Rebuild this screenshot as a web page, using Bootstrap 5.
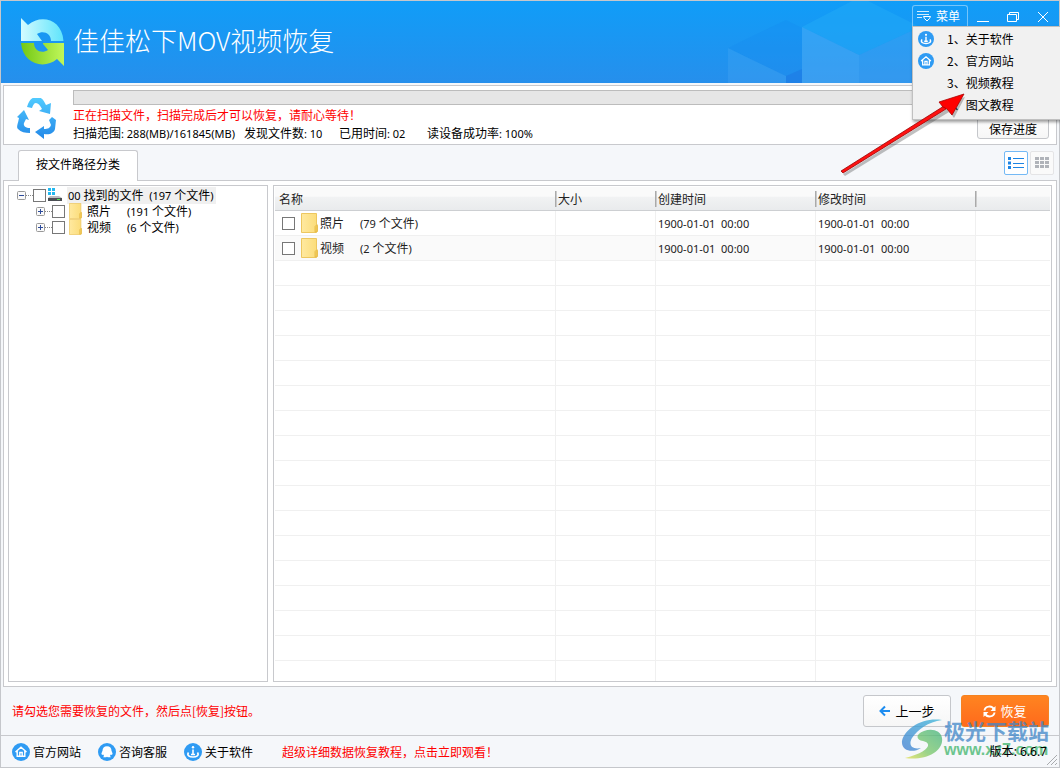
<!DOCTYPE html>
<html lang="zh-CN">
<head>
<meta charset="utf-8">
<meta name="viewport" content="width=device-width, initial-scale=1">
<title>佳佳松下MOV视频恢复</title>
<link href="https://cdn.jsdelivr.net/npm/bootstrap@5.3.0/dist/css/bootstrap.min.css" rel="stylesheet">
<style>
  body { font: 12px/16px "Noto Sans CJK SC", "Noto Sans", sans-serif; color: #000; background: #f5f7fa; }
  .app { border: 1px solid #c5c7cb; }
  .lat { font-family: "Noto Sans", sans-serif; font-size: 11px; white-space: pre; }
  .edge { border: 1px solid #c8c9cd; }
  button { font: inherit; }
  a { color: #000; text-decoration: none; }
  .red { color: #f00; }

  /* title bar */
  .titlebar { height: 82px; background: linear-gradient(#109df8, #268fec); }
  .cubes { position: absolute; top: 0; right: 0; }
  .brand-name { font-size: 26px; line-height: 40px; font-weight: 300; color: #fff; margin: 0 0 4px 6px; }
  .win { height: 22px; top: 4px; right: 1px; }
  .win button { background: none; border: 0; padding: 0 0 2px; color: #fff; }
  .win .menu-btn { width: 56px; height: 22px; border: 1px solid #74c5fb; border-bottom: 0; border-radius: 3px 3px 0 0; padding-left: 4px; }
  .win .ctl { width: 30px; height: 22px; }
  .menu-pop { top: 25px; right: -1px; width: 148px; padding: 1px 0 3px; background: #f1f1f1; border: 1px solid #c0c0c0; border-right: 0; box-shadow: 1px 2px 3px #0006; z-index: 5; }
  .menu-pop a { height: 22px; padding-left: 5px; }
  .menu-pop .ico { width: 16px; height: 16px; margin-right: 13px; }

  /* scan panel */
  .scan { margin: 2px 2px 0; height: 60px; background: #fff; padding: 4px 5px 0 12px; }
  .bar { height: 15px; border: 1px solid #bcbcbc; background: #e6e6e6; border-radius: 0; }
  .facts { padding-top: 2px; }
  .facts .red { margin-bottom: 2px; }
  .s1 { width: 171px; } .s2 { width: 95px; } .s3 { width: 88px; }
  .plain-btn { border: 1px solid #c5c7cb; border-radius: 3px; background: linear-gradient(#fff, #f6f6f6); }
  .save { width: 72px; height: 24px; margin: 0 2px 0 0; padding: 3px 0 0; line-height: 16px; margin-top: 10px; }

  /* tabs */
  .tabs { height: 35px; padding: 5px 5px 0 17px; }
  .tab-on { width: 120px; height: 31px; margin-bottom: -1px; background: #fff; border: 1px solid #c8c9cd; border-bottom: 0; border-radius: 3px 3px 0 0; z-index: 1; padding: 0 0 4px; }
  .views { gap: 2px; padding-top: 1px; }
  .view { width: 24px; height: 24px; padding: 0; border: 1px solid #e4e4e6; border-radius: 2px; background: #fafafa; }
  .view.on { border-color: #74b9f5; background: #fff; }

  /* work area */
  .work { margin: 0 2px; padding: 4px; background: #fff; gap: 5px; min-height: 0; }
  .tree { width: 260px; padding: 1px 0 0 8px; }
  .tree ul { padding-left: 19px; }
  .tree .node { height: 16px; }
  .tree .exp { width: 9px; height: 9px; }
  .dots { width: 7px; border-top: 1px dotted #888; }
  input[type=checkbox] { appearance: none; width: 13px; height: 13px; border: 1px solid #777; background: #fff; margin: 0; flex: none; }
  .sel { background: #f0f0f0; padding: 0 2px 0 1px; margin-left: 4px; }
  .tree li label { margin-left: 5px; }
  .list { padding: 1px; overflow: hidden; min-width: 0; min-height: 0; }
  .files { table-layout: fixed; width: 100%; border-collapse: separate; border-spacing: 0; color: #222; }
  .files th, .files td { padding: 0 0 0 3px; }
  .files th { height: 24px; font-weight: 400; background: linear-gradient(#fafafa 0 40%, #f1f2f3 45%, #e9ebed); border-bottom: 1px solid #cdcfd2; }
  .files th:first-child { padding-left: 4px; }
  .files th + th { background: linear-gradient(90deg, #aaa 50%, #ccc 50%) 0 4px / 2px 16px no-repeat, linear-gradient(#fafafa 0 40%, #f1f2f3 45%, #e9ebed); }
  .files td { height: 25px; border-bottom: 1px solid #f0f0f0; }
  .files td + td { border-left: 1px solid #f0f0f0; padding: 2px 0 0 2px; }
  .files tr:nth-child(2) td:not(:last-child) { background: #fafafa; }
  .files td:first-child { padding-left: 7px; }
  .files label { margin-left: 1px; padding-top: 1px; }

  /* footer */
  .hint { height: 48px; padding: 0 10px 0 11px; }
  .act { width: 88px; height: 32px; font-size: 13px; padding: 0; border-radius: 3px; }
  .prev { margin-right: 10px; }
  .go { border: 1px solid #f58220; background: linear-gradient(#ff8420, #ff6a1c); color: #fff; }
  .status { height: 32px; border-top: 1px solid #c8c9cd; padding: 0 12px 0 11px; }
  .status .ico { width: 18px; height: 18px; margin-right: 3px; }
  .st { width: 86px; }
  .mark-wm { right: 10px; bottom: 7px; opacity: .75; pointer-events: none; }
  .wm-cn { font-size: 21px; line-height: 22px; font-weight: 700; color: #3f86c8; }
  .wm-url { font: 700 16px/18px "Liberation Sans", sans-serif; color: #3fb56b; }
  .ver { z-index: 2; }
  .ver .lat { font-size: 12px; }
  .grip { right: 1px; bottom: 1px; }
  .pointer { left: 836px; top: 86px; z-index: 6; pointer-events: none; }
</style>
</head>
<body>
<svg width="0" height="0" class="position-absolute" aria-hidden="true">
  <defs>
    <symbol id="i-home" viewBox="0 0 18 18"><circle cx="9" cy="9" r="9" fill="#2f9bf3"/><path d="M3.500 9 9 4.200 14.500 9M5.200 8v5.300h7.600V8M7.800 13V9.500h2.400V13" fill="none" stroke="#fff" stroke-width="1.400"/></symbol>
    <symbol id="i-about" viewBox="0 0 18 18"><circle cx="9" cy="9" r="9" fill="#2f9bf3"/><path d="M9 6.500v5M4.500 9.500c-2 3 1 4.500 4.500 4.500s6.500-1.500 4.500-4.500M7 11.500h4" fill="none" stroke="#fff" stroke-width="1.600"/><circle cx="9" cy="4.300" r="1.200" fill="#fff"/></symbol>
    <symbol id="i-qq" viewBox="0 0 18 18"><circle cx="9" cy="9" r="9" fill="#2f9bf3"/><path d="M9 3.200c-3 0-4.500 2-4.500 4.500L3.400 10.500l.6 1.500 1.200-.5.8 1.300-.8 1.400h3l.8-.5.8.5h3l-.8-1.400.8-1.300 1.200.5.6-1.500-1.100-2.800C13.500 5.200 12 3.200 9 3.200z" fill="#fff"/></symbol>
    <linearGradient id="fg" x2="1"><stop stop-color="#ffe9a0"/><stop offset="1" stop-color="#fbdc78"/></linearGradient>
    <symbol id="i-folder" viewBox="0 0 17 20"><path d="M.5.500H15.500V11.500l1 1v6l-1 1H.5z" fill="url(#fg)" stroke="#edc75f"/><path d="M14 19v-5.500l2-2v7z" fill="#f5cf5f" stroke="#e3b744" stroke-width=".8"/></symbol>
    <symbol id="i-plus" viewBox="0 0 9 9"><rect x=".5" y=".5" width="8" height="8" rx="1" fill="#fafafa" stroke="#999"/><path d="M2 4.500h5M4.500 2v5" stroke="#2b4a9b"/></symbol>
    <symbol id="i-minus" viewBox="0 0 9 9"><rect x=".5" y=".5" width="8" height="8" rx="1" fill="#fafafa" stroke="#999"/><path d="M2 4.500h5" stroke="#2b4a9b"/></symbol>
  </defs>
</svg>

<div class="app vh-100 d-flex flex-column position-relative">
  <header class="titlebar flex-shrink-0 position-relative d-flex align-items-center">
    <svg class="cubes" width="331" height="82" viewBox="728 1 331 82" aria-hidden="true">
      <path d="M728 48 786 20 802 28V69L786 76z" fill="#1488ee" opacity=".25"/>
      <path d="M728 48 786 76V83H728z" fill="#5bb0f6" opacity=".22"/>
      <path d="M786 76 802 69V83H786z" fill="#1a78e4" opacity=".6"/>
      <path d="M802 27 852 1H868L920 27 859 55z" fill="#1fa8f6" opacity=".6"/>
      <path d="M802 27 859 55V83H802z" fill="#5ab4f8" opacity=".4"/>
      <path d="M859 55 920 27V83H859z" fill="#5ab0f6" opacity=".28"/>
    </svg>
    <svg class="ms-3 flex-shrink-0" width="50" height="50" viewBox="17 17 50 50" aria-hidden="true">
      <defs>
        <linearGradient id="lb" x2="1"><stop stop-color="#d4fbff"/><stop offset="1" stop-color="#5ee4fc"/></linearGradient>
        <linearGradient id="lg" x2="1"><stop stop-color="#73c814"/><stop offset="1" stop-color="#c0f75a"/></linearGradient>
      </defs>
      <path d="M21 18 28 25C41 14 62 19 63.500 41H51C51 33 43 30 37 34L42 41H21z" fill="url(#lb)"/>
      <path d="M64 66 57 59C44 70 23 64 21 43H34C34 51 42 54 48 50L43 44V43H64z" fill="url(#lg)"/>
    </svg>
    <h1 class="brand-name">佳佳松下MOV视频恢复</h1>
    <div class="win position-absolute d-flex">
      <button class="menu-btn d-flex align-items-center" type="button" aria-expanded="true">
        <svg class="me-1" width="15" height="14" viewBox="0 0 15 14"><path d="M0 2.500h12M0 5.500h12M0 8.500h5" stroke="#fff" stroke-opacity=".8"/><path d="M6.500 7.500h7l-1 2-2.500 2.500-2.500-2.500z" fill="none" stroke="#fff"/></svg>菜单
      </button>
      <button class="ctl" type="button" aria-label="最小化"><svg width="12" height="12"><path d="M0 10.500h12" stroke="#fff"/></svg></button>
      <button class="ctl" type="button" aria-label="还原"><svg width="12" height="12"><path d="M.5 3.500h9v7h-9zM2.500 3V1.500h9v7H10" fill="none" stroke="#fff"/></svg></button>
      <button class="ctl" type="button" aria-label="关闭"><svg width="12" height="12"><path d="M1 1 11 11M11 1 1 11" stroke="#fff"/></svg></button>
    </div>
    <nav class="menu-pop position-absolute">
      <a href="#" class="d-flex align-items-center"><svg class="ico"><use href="#i-about"/></svg><span>1、关于软件</span></a>
      <a href="#" class="d-flex align-items-center"><svg class="ico"><use href="#i-home"/></svg><span>2、官方网站</span></a>
      <a href="#" class="d-flex align-items-center"><span class="ico"></span><span>3、视频教程</span></a>
      <a href="#" class="d-flex align-items-center"><span class="ico"></span><span>4、图文教程</span></a>
    </nav>
  </header>

  <section class="scan edge flex-shrink-0 d-flex">
    <svg class="mt-2 me-3 flex-shrink-0" width="41" height="43" viewBox="16 98 41 43" aria-hidden="true">
      <defs><linearGradient id="rc" gradientUnits="userSpaceOnUse" x1="0" x2="0" y1="97" y2="139"><stop stop-color="#52ccff"/><stop offset="1" stop-color="#2388e8"/></linearGradient></defs>
      <g fill="url(#rc)">
        <path d="M27 107C29 100 32 97 37 97 42 97 44 101 46 105L51 103 50 114 39 111 42 109C40 105 38 103 36 103 34 103 33 105 32 108z"/>
        <path d="M24 110 17 117 19 118C18 124 16 127 18 129 21 132 25 133 30 133V128C26 128 23 126 24 123L26 119 29 120z"/>
        <path d="M52 117 56 120 55 129C54 133 50 135 44 134V139L35 132 44 126V129C48 129 50 128 51 125L49 120z"/>
      </g>
    </svg>
    <div class="flex-grow-1">
      <div class="bar progress" role="progressbar" aria-label="扫描进度" aria-valuenow="0" aria-valuemin="0" aria-valuemax="100"></div>
      <div class="d-flex justify-content-between">
        <div class="facts">
          <div class="red text-nowrap">正在扫描文件，扫描完成后才可以恢复，请耐心等待！</div>
          <div class="d-flex text-nowrap">
            <div class="s1">扫描范围<span class="lat">: 288(MB)/161845(MB)</span></div>
            <div class="s2">发现文件数<span class="lat">: 10</span></div>
            <div class="s3">已用时间<span class="lat">: 02</span></div>
            <div>读设备成功率<span class="lat">: 100%</span></div>
          </div>
        </div>
        <button class="plain-btn save" type="button">保存进度</button>
      </div>
    </div>
  </section>

  <div class="tabs flex-shrink-0 d-flex justify-content-between">
    <button class="tab-on position-relative" type="button">按文件路径分类</button>
    <div class="views d-flex">
      <button class="view on d-flex align-items-center justify-content-center" type="button" aria-label="列表"><svg width="16" height="12"><path d="M0 1.500h3M0 6h3M0 10.500h3" stroke="#1c84e4" stroke-width="3"/><path d="M5 1.500h11M5 6.500h11M5 10.500h11" stroke="#1c84e4"/></svg></button>
      <button class="view d-flex align-items-center justify-content-center" type="button" aria-label="图标"><svg width="14" height="12"><path d="M0 1.500h14M0 5.500h14M0 9.500h14" stroke="#b0b3b9" stroke-width="3" stroke-dasharray="4 1"/></svg></button>
    </div>
  </div>

  <main class="work edge flex-grow-1 d-flex">
    <aside class="tree edge flex-shrink-0">
      <div class="node d-flex align-items-center"><svg class="exp"><use href="#i-minus"/></svg><span class="dots"></span><input type="checkbox" id="t0">
        <svg width="17" height="14" viewBox="0 0 17 14"><path d="M2 0h3v3H2zM6 0h3v3H6zM2 4h3v3H2zM6 4h3v3H6z" fill="#22b8f0"/><path d="M4 8h9l3 2H2z" fill="#b9bcc0"/><path d="M2 10h14v3H2z" fill="#4b4e53"/><path d="M11 11h3v1h-3z" fill="#4ee04e"/></svg>
        <label for="t0" class="sel"><span class="lat">00 </span>找到的文件<span class="lat">  (197 </span>个文件<span class="lat">)</span></label></div>
      <ul class="list-unstyled mb-0">
        <li class="node d-flex align-items-center"><svg class="exp"><use href="#i-plus"/></svg><span class="dots"></span><input type="checkbox" id="t1">
          <svg class="ms-1" width="13" height="16" viewBox="0 0 17 20" preserveAspectRatio="none"><use href="#i-folder" width="17" height="20"/></svg>
          <label for="t1" class="d-flex gap-3">照片<span><span class="lat">(191 </span>个文件<span class="lat">)</span></span></label></li>
        <li class="node d-flex align-items-center"><svg class="exp"><use href="#i-plus"/></svg><span class="dots"></span><input type="checkbox" id="t2">
          <svg class="ms-1" width="13" height="16" viewBox="0 0 17 20" preserveAspectRatio="none"><use href="#i-folder" width="17" height="20"/></svg>
          <label for="t2" class="d-flex gap-3">视频<span><span class="lat">(6 </span>个文件<span class="lat">)</span></span></label></li>
      </ul>
    </aside>

    <section class="list edge flex-grow-1">
      <table class="files">
        <colgroup><col><col style="width:100px"><col style="width:160px"><col style="width:160px"><col style="width:75px"></colgroup>
        <thead><tr><th scope="col">名称</th><th scope="col">大小</th><th scope="col">创建时间</th><th scope="col">修改时间</th><th></th></tr></thead>
        <tbody>
          <tr><td><div class="d-flex align-items-center"><input type="checkbox" id="f1"><svg class="ms-1" width="20" height="20"><use href="#i-folder" width="17" height="20" x="2"/></svg><label for="f1" class="d-flex gap-3">照片<span><span class="lat">(79 </span>个文件<span class="lat">)</span></span></label></div></td><td></td><td class="lat">1900-01-01  00:00</td><td class="lat">1900-01-01  00:00</td><td></td></tr>
          <tr><td><div class="d-flex align-items-center"><input type="checkbox" id="f2"><svg class="ms-1" width="20" height="20"><use href="#i-folder" width="17" height="20" x="2"/></svg><label for="f2" class="d-flex gap-3">视频<span><span class="lat">(2 </span>个文件<span class="lat">)</span></span></label></div></td><td></td><td class="lat">1900-01-01  00:00</td><td class="lat">1900-01-01  00:00</td><td></td></tr>
          <tr><td></td><td></td><td></td><td></td><td></td></tr>
          <tr><td></td><td></td><td></td><td></td><td></td></tr>
          <tr><td></td><td></td><td></td><td></td><td></td></tr>
          <tr><td></td><td></td><td></td><td></td><td></td></tr>
          <tr><td></td><td></td><td></td><td></td><td></td></tr>
          <tr><td></td><td></td><td></td><td></td><td></td></tr>
          <tr><td></td><td></td><td></td><td></td><td></td></tr>
          <tr><td></td><td></td><td></td><td></td><td></td></tr>
          <tr><td></td><td></td><td></td><td></td><td></td></tr>
          <tr><td></td><td></td><td></td><td></td><td></td></tr>
          <tr><td></td><td></td><td></td><td></td><td></td></tr>
          <tr><td></td><td></td><td></td><td></td><td></td></tr>
          <tr><td></td><td></td><td></td><td></td><td></td></tr>
          <tr><td></td><td></td><td></td><td></td><td></td></tr>
          <tr><td></td><td></td><td></td><td></td><td></td></tr>
          <tr><td></td><td></td><td></td><td></td><td></td></tr>
          <tr><td></td><td></td><td></td><td></td><td></td></tr>
        </tbody>
      </table>
    </section>
  </main>

  <div class="hint flex-shrink-0 d-flex align-items-center">
    <div class="red me-auto">请勾选您需要恢复的文件，然后点[恢复]按钮。</div>
    <button class="plain-btn act prev d-flex align-items-center justify-content-center gap-1" type="button"><svg width="12" height="12"><path d="M11 6H2M6 1.500 1.500 6 6 10.500" fill="none" stroke="#1c8cf0" stroke-width="2"/></svg>上一步</button>
    <button class="act go d-flex align-items-center justify-content-center gap-1" type="button"><svg width="13" height="13"><path d="M1.500 5.500C2 1 9 0 11 4.500M11.500 7.500C11 12 4 13 2 8.500" fill="none" stroke="#fff" stroke-width="2"/><path d="M12.500 1v5h-5zM.5 12V7h5z" fill="#fff"/></svg>恢复</button>
  </div>

  <footer class="status flex-shrink-0 d-flex align-items-center">
    <a href="#" class="st d-flex align-items-center"><svg class="ico"><use href="#i-home"/></svg>官方网站</a>
    <a href="#" class="st d-flex align-items-center"><svg class="ico"><use href="#i-qq"/></svg>咨询客服</a>
    <a href="#" class="st d-flex align-items-center"><svg class="ico"><use href="#i-about"/></svg>关于软件</a>
    <a href="#" class="red ms-2 ps-1 me-auto">超级详细数据恢复教程，点击立即观看！</a>
    <div class="ver position-relative">版本<span class="lat">: 6.6.7</span></div>
  </footer>

  <div class="mark-wm position-absolute d-flex align-items-center" aria-hidden="true">
    <svg width="43" height="42" viewBox="900 717 43 42">
      <defs><linearGradient id="w1" x1="1" x2="0" y2="1"><stop stop-color="#35b4d8"/><stop offset="1" stop-color="#3c7bd0"/></linearGradient>
      <linearGradient id="w2" x1="1" x2="0" y2="1"><stop stop-color="#3fb27c"/><stop offset=".6" stop-color="#7cc866"/><stop offset="1" stop-color="#e8e04c"/></linearGradient></defs>
      <path d="M941 719C922 716 904 727 901 740 900 749 911 753 920 747 911 749 907 744 911 737 917 728 927 721 941 719z" fill="url(#w1)"/>
      <path d="M923 730C914 733 915 739 922 740 932 742 928 751 904 757 925 760 943 750 941 737 940 729 930 727 923 730z" fill="url(#w2)"/>
    </svg>
    <div><div class="wm-cn">极光下载站</div><div class="wm-url">www.xz7.com</div></div>
  </div>
  <svg class="grip position-absolute" width="12" height="12" aria-hidden="true"><path d="M1 11 11 1M5 11 11 5M9 11l2-2" stroke="#a9abae"/></svg>

  <svg class="pointer position-absolute" width="134" height="94" viewBox="837 87 134 94" aria-hidden="true">
    <g fill="#333" opacity=".3" transform="translate(2 3)"><path d="M841 171 945 106 947 109 843 173z"/><path d="M963 94 939 103 946 107 952 115z"/></g>
    <path d="M841 171 944 106 946 109 843 173z" fill="#f11" stroke="#900" stroke-width=".8"/>
    <path d="M964 94 939 102 943 107 947 109 952 115z" fill="#f00" stroke="#a00" stroke-width=".8"/>
  </svg>
</div>
<script src="https://cdn.jsdelivr.net/npm/bootstrap@5.3.0/dist/js/bootstrap.bundle.min.js"></script>
</body>
</html>
